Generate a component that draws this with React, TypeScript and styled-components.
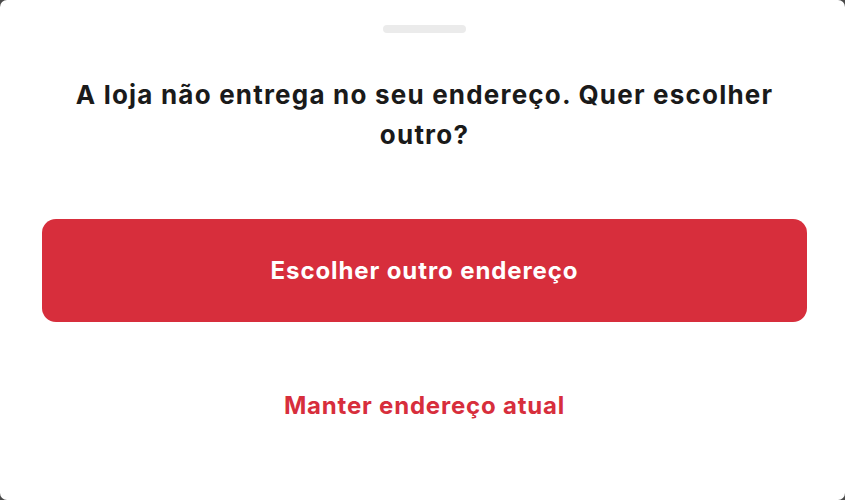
import styled, { createGlobalStyle } from 'styled-components'

const GlobalStyle = createGlobalStyle`
    html, body {
        margin: 0;
        padding: 0;
        background: #4a4a4a;
        font-family: Inter, "Noto Sans", sans-serif;
    }
`

const Sheet = styled.div`
    display: flex;
    flex-direction: column;
    align-items: center;
    box-sizing: border-box;
    width: 845px;
    height: 500px;
    background: #ffffff;
    border-radius: 7px;
    padding: 25px 38px 0 42px;
`

const Handle = styled.div`
    width: 83px;
    height: 8px;
    border-radius: 4px;
    background: #ebebeb;
`

const Title = styled.h2`
    margin: 42px 0 0;
    text-align: center;
    font-size: 26px;
    line-height: 40px;
    font-weight: 700;
    letter-spacing: 1.2px;
    color: #1a1a1a;
    max-width: 740px;
`

const PrimaryButton = styled.button`
    display: flex;
    align-items: center;
    justify-content: center;
    width: 100%;
    height: 103px;
    margin-top: 64px;
    border: none;
    border-radius: 14px;
    background: #d72e3c;
    color: #ffffff;
    font-family: inherit;
    font-size: 24px;
    font-weight: 700;
    letter-spacing: 0.9px;
`

const LinkButton = styled.button`
    margin-top: 68px;
    border: none;
    background: none;
    color: #d72e3c;
    font-family: inherit;
    font-size: 24px;
    font-weight: 700;
    letter-spacing: 0.8px;
`

const App = () => {
    return (
        <>
            <GlobalStyle/>
            <Sheet>
                <Handle/>
                <Title>A loja não entrega no seu endereço. Quer escolher outro?</Title>
                <PrimaryButton>Escolher outro endereço</PrimaryButton>
                <LinkButton>Manter endereço atual</LinkButton>
            </Sheet>
        </>
    )
}

export default App
